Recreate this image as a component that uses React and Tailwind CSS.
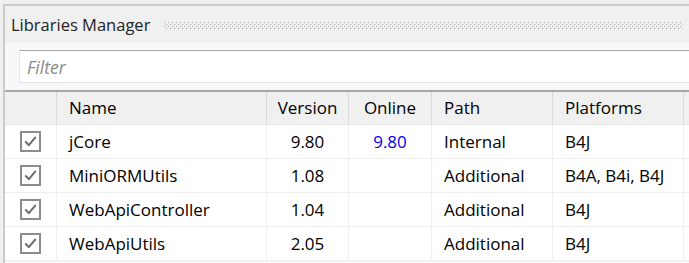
import React from 'react';

const rows = [
  { name: 'jCore', version: '9.80', online: '9.80', path: 'Internal', platforms: 'B4J' },
  { name: 'MiniORMUtils', version: '1.08', online: '', path: 'Additional', platforms: 'B4A, B4i, B4J' },
  { name: 'WebApiController', version: '1.04', online: '', path: 'Additional', platforms: 'B4J' },
  { name: 'WebApiUtils', version: '2.05', online: '', path: 'Additional', platforms: 'B4J' },
];

const cols = 'grid grid-cols-[52px_210px_82px_83px_121px_131px_1fr]';

const Check = () => (
  <div className="w-[21px] h-[21px] border-2 border-[#8c8c8c] bg-white flex items-center justify-center">
    <svg viewBox="0 0 16 16" width="15" height="15" fill="none">
      <path d="M3 8.5l3.2 3.4L13 3.8" stroke="#6e6e6e" strokeWidth="2.2" strokeLinecap="round" strokeLinejoin="round" />
    </svg>
  </div>
);

// grip band beside the title
const Grip = () => (
  <svg className="flex-1 mr-[6px]" height="8">
    <defs>
      <pattern id="grip" width="4" height="4" patternUnits="userSpaceOnUse">
        <rect x="0" y="0" width="1.2" height="1.2" fill="#b2b2b2" />
        <rect x="2" y="2" width="1.2" height="1.2" fill="#b2b2b2" />
      </pattern>
    </defs>
    <rect x="0" y="0" width="100%" height="8" fill="url(#grip)" />
  </svg>
);

export default function App() {
  return (
    <div className="w-[689px] h-[263px] bg-[#f0f0f0] overflow-hidden text-black font-['Open_Sans',sans-serif]">
      <div className="ml-[3px] mt-[4px] h-[259px] border-t-2 border-l-2 border-[#cbcbcb]">
        {/* title bar */}
        <div className="h-[36px] flex items-center pl-[6px] pt-[3px] gap-[14px]">
          <span className="text-[16.5px] text-[#222]">Libraries Manager</span>
          <Grip />
        </div>

        <div className="bg-[#f8f8f8] pt-[8px] h-full">
          {/* filter */}
          <div className="ml-[14px] h-[33px] bg-white border-t border-[#a8a8a8] border-b border-b-[#e2e6ec] border-l border-l-[#e2e6ec] flex items-center pl-[7px] pt-[2px]">
            <span className="italic text-[17.5px] text-[#8a8a8a]">Filter</span>
          </div>

          {/* table */}
          <div className="mt-[7px] border-t-2 border-[#a8a8a8] bg-white">
            <div className={`${cols} h-[33px] bg-[#f0f0f0] border-b border-[#e4e4e4] text-[17px]`}>
              <div className="border-r border-[#dadada]" />
              <div className="border-r border-[#dadada] flex items-center pl-[12px]">Name</div>
              <div className="border-r border-[#dadada] flex items-center justify-center">Version</div>
              <div className="border-r border-[#dadada] flex items-center justify-center">Online</div>
              <div className="border-r border-[#dadada] flex items-center pl-[12px]">Path</div>
              <div className="border-r border-[#dadada] flex items-center pl-[12px]">Platforms</div>
              <div />
            </div>
            {rows.map((r) => (
              <div key={r.name} className={`${cols} h-[34px] border-b border-[#eeeeee] text-[17px]`}>
                <div className="border-r border-[#f0f0f0] flex items-center pl-[15px]">
                  <Check />
                </div>
                <div className="border-r border-[#f0f0f0] flex items-center pl-[12px]">{r.name}</div>
                <div className="border-r border-[#f0f0f0] flex items-center justify-center">{r.version}</div>
                <div className="border-r border-[#f0f0f0] flex items-center justify-center text-[#0000ee]">{r.online}</div>
                <div className="border-r border-[#f0f0f0] flex items-center pl-[12px]">{r.path}</div>
                <div className="border-r border-[#f0f0f0] flex items-center pl-[12px]">{r.platforms}</div>
                <div />
              </div>
            ))}
          </div>
        </div>
      </div>
    </div>
  );
}
